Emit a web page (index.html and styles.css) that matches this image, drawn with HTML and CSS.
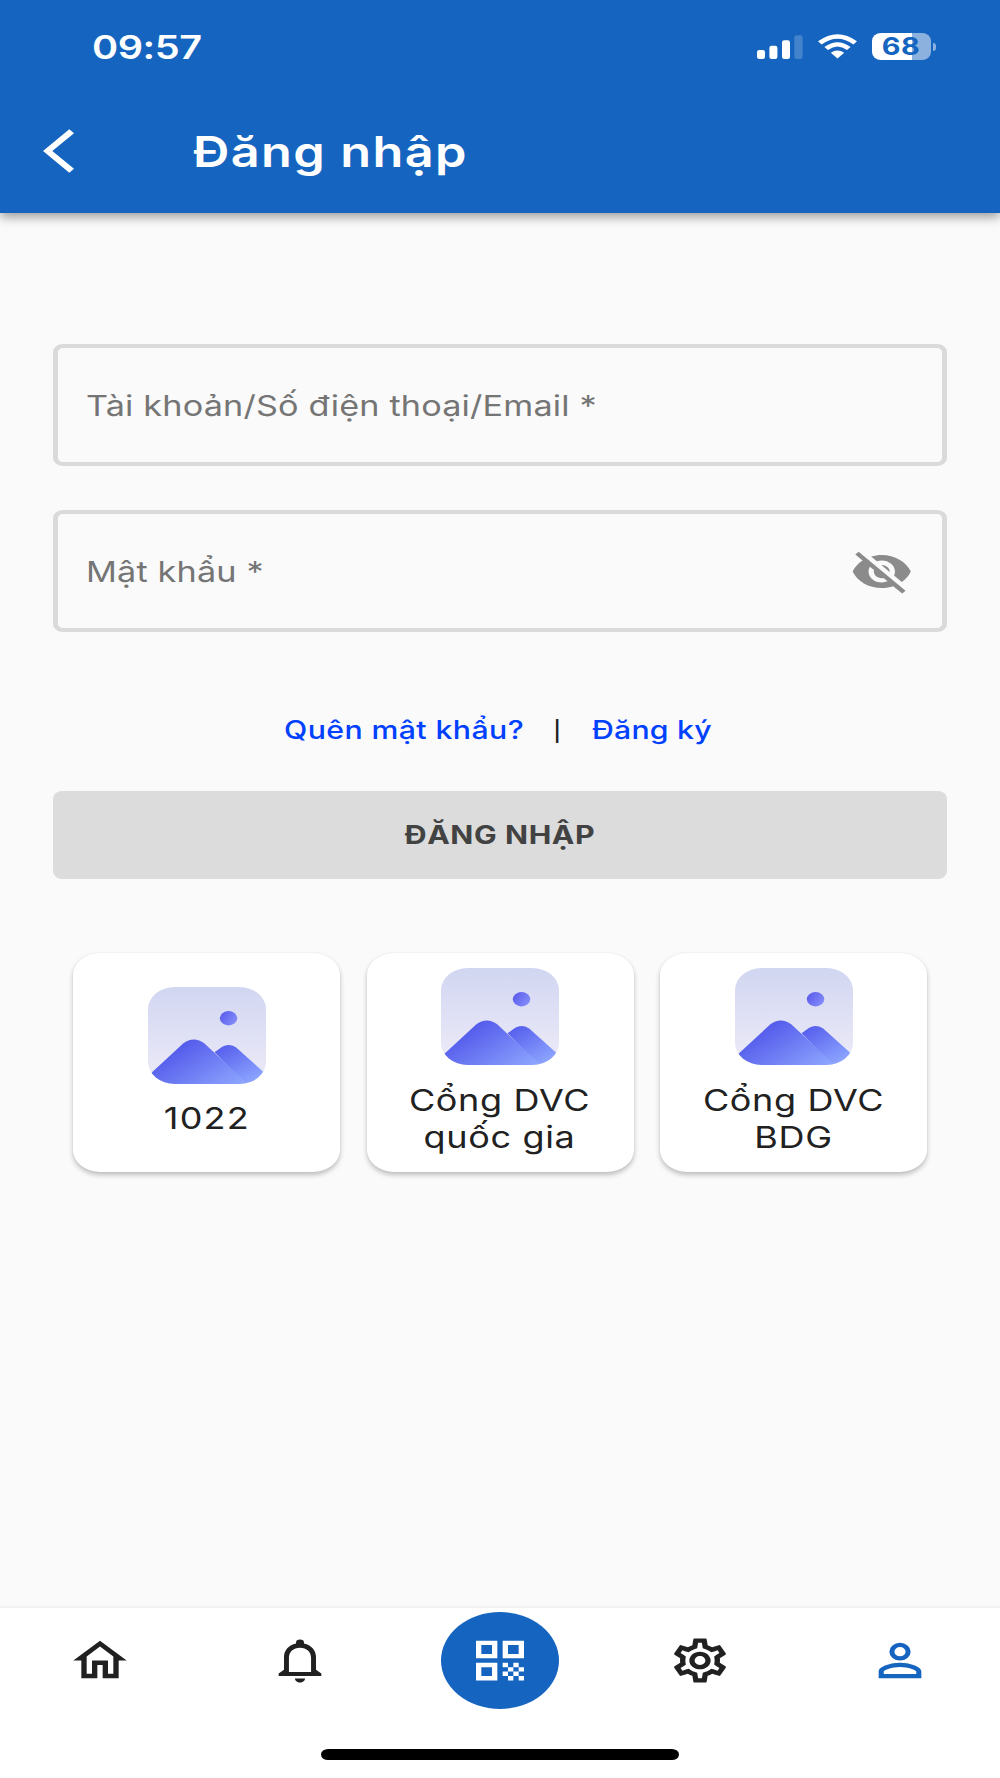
FILE: index.html
```html
<!DOCTYPE html>
<html lang="vi">

<head>
    <meta charset="UTF-8">
    <meta name="viewport" content="width=device-width, initial-scale=1.0">
    <title>Đăng nhập</title>
    <link rel="stylesheet" href="styles.css">
</head>

<body>

    <header class="header">
        <div class="status-bar">
            <span class="time wide">09:57</span>
            <div class="status-icons">
                <svg class="signal" viewBox="0 0 46 24">
                    <rect x="0" y="15" width="8" height="9" rx="2.2" />
                    <rect x="12.4" y="10.7" width="8" height="13.3" rx="2.2" />
                    <rect x="25" y="5.3" width="8" height="18.7" rx="2.2" />
                    <rect x="37.3" y="0.3" width="8.3" height="23.7" rx="2.2" opacity="0.2" />
                </svg>
                <svg class="wifi" viewBox="0 0 39 25">
                    <path d="M0 7.3Q19.5 -7 39 7.3L35.4 10.4Q19.5 -1 3.6 10.4Z" />
                    <path d="M6.4 13Q19.5 3.4 32.6 13L29 16Q19.5 9 10 16Z" />
                    <path d="M12.8 18.8Q19.5 14.4 26.2 18.8L19.5 24.6Z" />
                </svg>
                <div class="battery"><span class="wide">68</span></div>
                <div class="battery-cap"></div>
            </div>
        </div>
        <div class="app-bar">
            <svg class="back" viewBox="0 0 31 44">
                <path d="M26.3 0.2L31 4.3L9.3 22L31 39.7L26.3 43.8L0 22Z" />
            </svg>
            <h1 class="wide">Đăng nhập</h1>
        </div>
    </header>

    <main class="content">
        <div class="field">
            <span class="placeholder wide">Tài khoản/Số điện thoại/Email *</span>
        </div>
        <div class="field">
            <span class="placeholder wide">Mật khẩu *</span>
            <svg class="eye" viewBox="0 0 24 24" preserveAspectRatio="none">
                <path d="M12 7c2.76 0 5 2.24 5 5 0 .65-.13 1.26-.36 1.83l2.92 2.92c1.51-1.26 2.7-2.89 3.43-4.75-1.73-4.39-6-7.5-11-7.5-1.4 0-2.74.25-3.98.7l2.16 2.16C10.74 7.13 11.35 7 12 7zM2 4.27l2.28 2.28.46.46C3.08 8.3 1.78 10.02 1 12c1.73 4.39 6 7.5 11 7.5 1.55 0 3.03-.3 4.38-.84l.42.42L19.73 22 21 20.73 3.27 3 2 4.27zM7.53 9.8l1.55 1.55c-.05.21-.08.43-.08.65 0 1.66 1.34 3 3 3 .22 0 .44-.03.65-.08l1.55 1.55c-.67.33-1.41.53-2.2.53-2.76 0-5-2.24-5-5 0-.79.2-1.53.53-2.2zm4.31-.78l3.15 3.15.02-.16c0-1.66-1.34-3-3-3l-.17.01z" />
            </svg>
        </div>

        <div class="links">
            <a class="forgot wide">Quên mật khẩu?</a>
            <span class="divider wide">|</span>
            <a class="register wide">Đăng ký</a>
        </div>

        <button class="login"><span class="wide">ĐĂNG NHẬP</span></button>

        <div class="cards">
            <div class="card">
                <svg class="picture" viewBox="0 0 353 290" preserveAspectRatio="none">
                    <defs>
                        <linearGradient id="sky" x1="0" y1="0" x2="0" y2="1">
                            <stop offset="0" stop-color="#d1d6f1" />
                            <stop offset="1" stop-color="#edebf8" />
                        </linearGradient>
                        <linearGradient id="hill" x1="0" y1="0.3" x2="1" y2="1">
                            <stop offset="0" stop-color="#4b4fe8" />
                            <stop offset="1" stop-color="#90a9ff" />
                        </linearGradient>
                        <linearGradient id="hill-back" x1="0.1" y1="0" x2="0.8" y2="0.9">
                            <stop offset="0" stop-color="#545cec" />
                            <stop offset="1" stop-color="#8da5ff" />
                        </linearGradient>
                        <linearGradient id="sun" x1="0" y1="0.2" x2="1" y2="0.8">
                            <stop offset="0" stop-color="#5a5aec" />
                            <stop offset="1" stop-color="#8690fa" />
                        </linearGradient>
                        <clipPath id="frame">
                            <rect width="353" height="290" rx="80" ry="66" />
                        </clipPath>
                        <g id="landscape" clip-path="url(#frame)">
                            <rect width="353" height="290" fill="url(#sky)" />
                            <ellipse cx="241" cy="93.5" rx="26" ry="21.5" fill="url(#sun)" />
                            <path d="M199 195L222 179Q241 168 263 180L353 261V290H293Z" fill="url(#hill-back)" />
                            <path d="M0 266L105 169Q137 145 169 169L299 290H0Z" fill="url(#hill)" />
                        </g>
                    </defs>
                    <use href="#landscape" />
                </svg>
                <p class="num wide">1022</p>
            </div>
            <div class="card">
                <svg class="picture" viewBox="0 0 353 290" preserveAspectRatio="none"><use href="#landscape" /></svg>
                <p class="wide">Cổng DVC<br>quốc gia</p>
            </div>
            <div class="card">
                <svg class="picture" viewBox="0 0 353 290" preserveAspectRatio="none"><use href="#landscape" /></svg>
                <p class="wide">Cổng DVC<br>BDG</p>
            </div>
        </div>
    </main>

    <footer class="footer">
        <nav class="tabs">
            <a class="tab">
                <svg viewBox="0 0 24 24" preserveAspectRatio="none">
                    <path d="M12 5.69l5 4.5V18h-2v-6H9v6H7v-7.81l5-4.5M12 3L2 12h3v8h6v-6h2v6h6v-8h3L12 3z" />
                </svg>
            </a>
            <a class="tab">
                <svg viewBox="0 0 24 24" preserveAspectRatio="none">
                    <path fill-rule="evenodd" d="M10.5 4.3V4a1.5 1.5 0 0 1 3 0v.3C16.2 4.95 18 7.4 18 10.5v5.7l2 1.7V19H4v-1.1l2-1.7v-5.7C6 7.4 7.8 4.95 10.5 4.3zM12 6.2c-2.5 0-4.15 1.95-4.15 4.5v6.5h8.3v-6.5c0-2.55-1.65-4.5-4.15-4.5zM10.1 20.2h3.8c0 1-.85 1.8-1.9 1.8s-1.9-.8-1.9-1.8z" />
                </svg>
            </a>
            <a class="tab">
                <span class="qr">
                    <svg viewBox="0 0 24 24" preserveAspectRatio="none">
                        <path d="M3 11h8V3H3v8zm2-6h4v4H5V5zM3 21h8v-8H3v8zm2-6h4v4H5v-4zM13 3v8h8V3h-8zm6 6h-4V5h4v4zM19 19h2v2h-2zM13 13h2v2h-2zM15 15h2v2h-2zM13 17h2v2h-2zM15 19h2v2h-2zM17 17h2v2h-2zM17 13h2v2h-2zM19 15h2v2h-2z" />
                    </svg>
                </span>
            </a>
            <a class="tab">
                <svg viewBox="0 0 24 24" preserveAspectRatio="none">
                    <path d="M19.43 12.98c.04-.32.07-.64.07-.98 0-.34-.03-.66-.07-.98l2.11-1.65c.19-.15.24-.42.12-.64l-2-3.46c-.09-.16-.26-.25-.44-.25-.06 0-.12.01-.17.03l-2.49 1c-.52-.4-1.08-.73-1.69-.98l-.38-2.65C14.46 2.18 14.25 2 14 2h-4c-.25 0-.46.18-.49.42l-.38 2.65c-.61.25-1.17.59-1.69.98l-2.49-1c-.06-.02-.12-.03-.18-.03-.17 0-.34.09-.43.25l-2 3.46c-.13.22-.07.49.12.64l2.11 1.65c-.04.32-.07.65-.07.98 0 .33.03.66.07.98l-2.11 1.65c-.19.15-.24.42-.12.64l2 3.46c.09.16.26.25.44.25.06 0 .12-.01.17-.03l2.49-1c.52.4 1.08.73 1.69.98l.38 2.65c.03.24.24.42.49.42h4c.25 0 .46-.18.49-.42l.38-2.65c.61-.25 1.17-.59 1.69-.98l2.49 1c.06.02.12.03.18.03.17 0 .34-.09.43-.25l2-3.46c.12-.22.07-.49-.12-.64l-2.11-1.65zm-1.98-1.71c.04.31.05.52.05.73 0 .21-.02.43-.05.73l-.14 1.13.89.7 1.08.84-.7 1.21-1.27-.51-1.04-.42-.9.68c-.43.32-.84.56-1.25.73l-1.06.43-.16 1.13-.2 1.35h-1.4l-.19-1.35-.16-1.13-1.06-.43c-.43-.18-.83-.41-1.23-.71l-.91-.7-1.06.43-1.27.51-.7-1.21 1.08-.84.89-.7-.14-1.13c-.03-.31-.05-.54-.05-.74s.02-.43.05-.73l.14-1.13-.89-.7-1.08-.84.7-1.21 1.27.51 1.04.42.9-.68c.43-.32.84-.56 1.25-.73l1.06-.43.16-1.13.2-1.35h1.39l.19 1.35.16 1.13 1.06.43c.43.18.83.41 1.23.71l.91.7 1.06-.43 1.27-.51.7 1.21-1.07.85-.89.7.14 1.13zM12 8c-2.21 0-4 1.79-4 4s1.79 4 4 4 4-1.79 4-4-1.79-4-4-4zm0 6c-1.1 0-2-.9-2-2s.9-2 2-2 2 .9 2 2-.9 2-2 2z" />
                </svg>
            </a>
            <a class="tab active">
                <svg viewBox="0 0 24 24" preserveAspectRatio="none">
                    <path d="M12 4a4 4 0 1 0 0 8 4 4 0 0 0 0-8zm0 6.1a2.1 2.1 0 1 1 0-4.2 2.1 2.1 0 0 1 0 4.2zM12 13c-2.67 0-8 1.34-8 4v3h16v-3c0-2.66-5.33-4-8-4zm6.1 5.1H5.9V17c0-.64 3.13-2.1 6.1-2.1s6.1 1.46 6.1 2.1v1.1z" />
                </svg>
            </a>
        </nav>
        <div class="home-indicator"></div>
    </footer>

</body>

</html>
```
FILE: styles.css
```css
* {
    box-sizing: border-box;
}

body {
    font-family: Inter, "Liberation Sans", sans-serif;
    background-color: #fafafa;
    color: #212121;
    margin: 0;
    height: 1778px;
    display: flex;
    flex-direction: column;
}

svg {
    display: block;
    flex: none;
    fill: currentColor;
}

/* stretched lettering */
.wide {
    display: block;
    flex: none;
    white-space: nowrap;
    transform: scaleX(1.2);
}

.header {
    height: 212.5px;
    background-color: #1565c0;
    color: #fff;
    box-shadow: 0 4px 10px rgba(0, 0, 0, 0.38);
}

.status-bar {
    height: 93px;
    padding: 0 64.5px 0 92px;
    display: flex;
    align-items: center;
    justify-content: space-between;
}

.time {
    font-size: 33px;
    font-weight: 570;
    letter-spacing: -0.35px;
    transform-origin: left;
}

.status-icons {
    display: flex;
    align-items: center;
}

.signal {
    width: 46px;
    height: 24px;
}

.wifi {
    width: 39px;
    height: 25px;
    margin-left: 14.5px;
}

.battery {
    width: 59px;
    height: 27px;
    margin-left: 15px;
    border-radius: 9px / 8px;
    background: linear-gradient(to right, #fff 68%, #8cb1df 68%);
    color: #1565c0;
    font-size: 24px;
    font-weight: 700;
    line-height: 28px;
    letter-spacing: 0.4px;
    display: flex;
    justify-content: center;
}

.battery-cap {
    width: 3px;
    height: 8px;
    margin-left: 2px;
    border-radius: 0 3px 3px 0;
    background-color: #8cb1df;
}

.app-bar {
    height: 116px;
    padding-left: 43px;
    display: flex;
    align-items: center;
}

.back {
    width: 31px;
    height: 44px;
}

h1 {
    margin: 0 0 0 119px;
    font-size: 42px;
    font-weight: 570;
    letter-spacing: 1.15px;
    transform-origin: left;
}

.content {
    flex: 1;
    padding: 131.5px 53px 0;
}

.field {
    height: 122px;
    margin-bottom: 44px;
    padding: 0 28.5px 0 28px;
    border: solid #dadada;
    border-width: 4px 5px;
    border-radius: 10px / 8px;
    display: flex;
    align-items: center;
    justify-content: space-between;
}

.placeholder {
    color: #757575;
    font-size: 28.5px;
    letter-spacing: 0.14px;
    transform-origin: left;
}

.eye {
    width: 63.5px;
    height: 53px;
    color: #8b8b8b;
}

.links {
    height: 40px;
    margin-top: 77.5px;
    padding-left: 231px;
    display: grid;
    grid-template-columns: 268.5px 39px auto;
    align-items: center;
    font-size: 25.2px;
    font-weight: 500;
    color: #0040ff;
}

.links .wide {
    transform-origin: left;
}

.forgot {
    letter-spacing: 0.35px;
}

.register {
    letter-spacing: 0.18px;
}

.divider {
    padding-top: 2px;
    font-size: 20px;
    font-weight: 500;
    line-height: 20px;
    color: #212121;
}

.login {
    width: 100%;
    height: 88px;
    margin-top: 41px;
    padding: 0;
    border: none;
    border-radius: 9px / 8px;
    background-color: #dcdcdc;
    color: #424242;
    font-family: inherit;
    font-size: 25.2px;
    font-weight: 700;
    letter-spacing: 0.5px;
}

.cards {
    margin-top: 74px;
    padding: 0 20px;
    display: grid;
    grid-template-columns: repeat(3, 1fr);
    gap: 26.5px;
}

.card {
    height: 219px;
    border-radius: 27px / 22px;
    background-color: #fff;
    box-shadow: 0 3px 5px rgba(0, 0, 0, 0.24), 0 0 2px rgba(0, 0, 0, 0.06);
    display: flex;
    flex-direction: column;
    align-items: center;
    justify-content: center;
}

.picture {
    width: 118px;
    height: 97px;
}

.card p {
    margin: 16.5px 0 0;
    font-size: 30px;
    line-height: 37px;
    letter-spacing: 0.55px;
    text-align: center;
}

.card .num {
    letter-spacing: 0.97px;
}

.footer {
    height: 170.5px;
    background-color: #fff;
    box-shadow: 0 -1px 3px rgba(0, 0, 0, 0.07);
    display: flex;
    flex-direction: column;
    align-items: center;
}

.tabs {
    width: 100%;
    height: 105.5px;
    display: grid;
    grid-template-columns: repeat(5, 1fr);
}

.tab {
    display: flex;
    align-items: center;
    justify-content: center;
}

.tab svg {
    width: 64px;
    height: 53px;
}

.tab.active {
    color: #1565c0;
}

.qr {
    width: 118px;
    height: 97px;
    border-radius: 50%;
    background-color: #1565c0;
    color: #fff;
    display: flex;
    align-items: center;
    justify-content: center;
}

.home-indicator {
    width: 358px;
    height: 11px;
    margin-top: 36px;
    border-radius: 7px / 5.5px;
    background-color: #000;
}
```
